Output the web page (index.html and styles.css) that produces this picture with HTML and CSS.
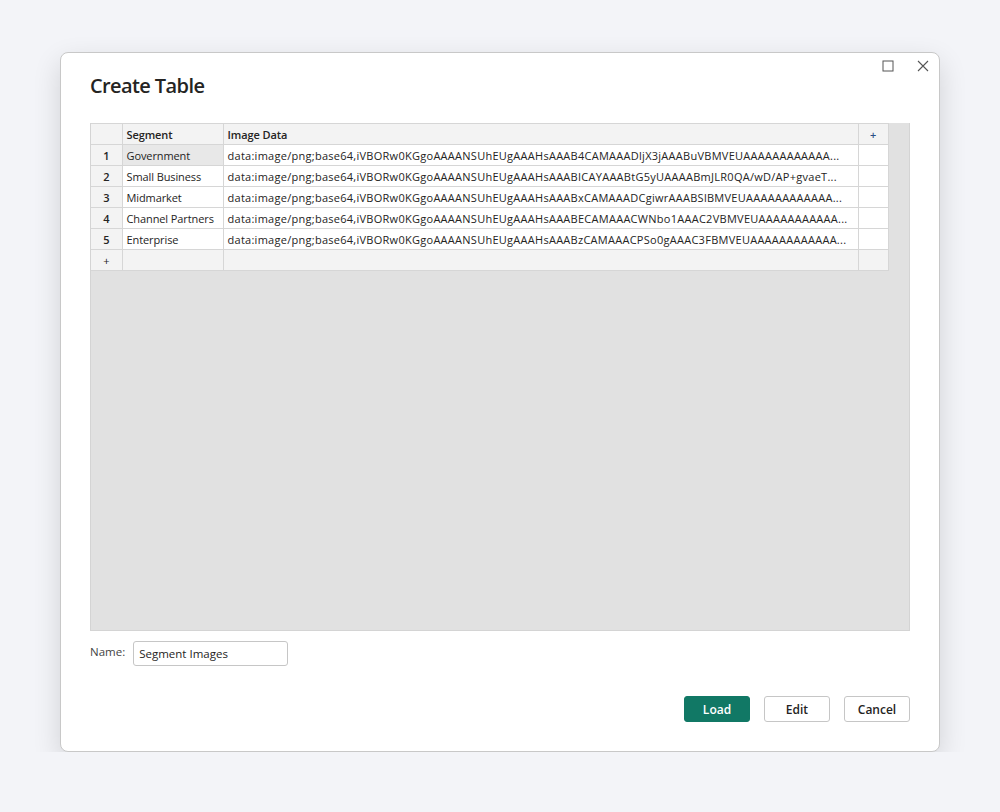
FILE: index.html
```html
<!DOCTYPE html>
<html lang="en">

<head>
    <meta charset="UTF-8">
    <title>Create Table</title>
    <link rel="stylesheet" href="styles.css">
</head>

<body>
    <div class="dialog">
        <div class="window-btns">
            <svg class="win-icon" width="12" height="12" viewBox="0 0 12 12">
                <rect x="1" y="1" width="10" height="10" fill="none" stroke="#555" stroke-width="1"/>
            </svg>
            <svg class="win-icon" width="12" height="12" viewBox="0 0 12 12">
                <path d="M1 1 L11 11 M11 1 L1 11" stroke="#555" stroke-width="1.1" fill="none"/>
            </svg>
        </div>

        <h2 class="title">Create Table</h2>

        <div class="grid-area">
            <table class="data-grid">
                <colgroup>
                    <col class="c-num">
                    <col class="c-seg">
                    <col class="c-data">
                    <col class="c-add">
                </colgroup>
                <thead>
                    <tr>
                        <th></th>
                        <th>Segment</th>
                        <th>Image Data</th>
                        <th class="add">+</th>
                    </tr>
                </thead>
                <tbody>
                    <tr>
                        <td class="num">1</td>
                        <td class="selected">Government</td>
                        <td class="data">data:image/png;base64,iVBORw0KGgoAAAANSUhEUgAAAHsAAAB4CAMAAADljX3jAAABuVBMVEUAAAAAAAAAAAA...</td>
                        <td></td>
                    </tr>
                    <tr>
                        <td class="num">2</td>
                        <td>Small Business</td>
                        <td class="data">data:image/png;base64,iVBORw0KGgoAAAANSUhEUgAAAHsAAABICAYAAABtG5yUAAAABmJLR0QA/wD/AP+gvaeT...</td>
                        <td></td>
                    </tr>
                    <tr>
                        <td class="num">3</td>
                        <td>Midmarket</td>
                        <td class="data">data:image/png;base64,iVBORw0KGgoAAAANSUhEUgAAAHsAAABxCAMAAADCgiwrAAABSlBMVEUAAAAAAAAAAAA...</td>
                        <td></td>
                    </tr>
                    <tr>
                        <td class="num">4</td>
                        <td>Channel Partners</td>
                        <td class="data">data:image/png;base64,iVBORw0KGgoAAAANSUhEUgAAAHsAAABECAMAAACWNbo1AAAC2VBMVEUAAAAAAAAAAA...</td>
                        <td></td>
                    </tr>
                    <tr>
                        <td class="num">5</td>
                        <td>Enterprise</td>
                        <td class="data">data:image/png;base64,iVBORw0KGgoAAAANSUhEUgAAAHsAAABzCAMAAACPSo0gAAAC3FBMVEUAAAAAAAAAAAA...</td>
                        <td></td>
                    </tr>
                    <tr class="new-row">
                        <td class="num add">+</td>
                        <td></td>
                        <td></td>
                        <td></td>
                    </tr>
                </tbody>
            </table>
        </div>

        <div class="name-row">
            <label for="tableName">Name:</label>
            <input type="text" id="tableName" value="Segment Images">
        </div>

        <div class="actions">
            <button class="btn primary">Load</button>
            <button class="btn">Edit</button>
            <button class="btn">Cancel</button>
        </div>
    </div>
</body>

</html>
```

FILE: styles.css
```css
body {
    margin: 0;
    padding: 52px 60px 0;
    background: #f3f4f8;
    font-family: "Open Sans", "Noto Sans", sans-serif;
    color: #252423;
}

.dialog {
    background: #fff;
    border: 1px solid #c8c8c8;
    border-radius: 8px;
    box-shadow: 0 10px 28px rgba(0, 0, 0, 0.14);
    height: 698px;
    padding: 0 29px;
    position: relative;
}

.window-btns {
    position: absolute;
    top: 7px;
    right: 10px;
    display: flex;
    gap: 23px;
}

.win-icon {
    display: block;
}

.title {
    margin: 0;
    padding-top: 19px;
    font-size: 20px;
    font-weight: 600;
    letter-spacing: -0.6px;
    line-height: 28px;
    color: #252423;
}

.grid-area {
    margin-top: 23px;
    height: 507px;
    background: #e1e1e1;
    border: 1px solid #d4d4d4;
    border-top: none;
}

.data-grid {
    border-collapse: collapse;
    table-layout: fixed;
    width: 797px;
    font-size: 11px;
    letter-spacing: -0.1px;
}

.c-num { width: 31px; }
.c-seg { width: 101px; }
.c-data { width: 635px; }
.c-add { width: 30px; }

.data-grid th,
.data-grid td {
    border: 1px solid #d6d6d6;
    height: 20px;
    padding: 0 4px;
    white-space: nowrap;
    overflow: hidden;
    text-overflow: ellipsis;
    text-align: left;
    background: #fff;
}

.data-grid td.data {
    letter-spacing: 0.27px;
}

.data-grid tr > :first-child {
    border-left: none;
}

.data-grid th {
    background: #f3f3f3;
    font-weight: 600;
    height: 20px;
}

.data-grid td.num {
    background: #f3f3f3;
    text-align: center;
    font-weight: 600;
}

.data-grid .add {
    text-align: center;
    font-weight: 400;
    font-size: 11px;
}

.data-grid th.add {
    color: #2b4f86;
    font-weight: 600;
}

.data-grid td.selected {
    background: #e8e8e8;
}

.new-row td {
    background: #f3f3f3;
}

.data-grid td.num.add {
    font-weight: 400;
}

.name-row {
    display: flex;
    align-items: center;
    gap: 8px;
    margin-top: 10px;
}

.name-row label {
    font-size: 11.5px;
    color: #444;
    position: relative;
    top: -2px;
}

.name-row input {
    width: 155px;
    height: 25px;
    box-sizing: border-box;
    border: 1px solid #c6c6c6;
    border-radius: 3px;
    padding: 0 5px;
    font-family: inherit;
    font-size: 11.5px;
    color: #252423;
}

.actions {
    display: flex;
    justify-content: flex-end;
    gap: 14px;
    margin-top: 30px;
}

.btn {
    width: 66px;
    height: 26px;
    box-sizing: border-box;
    border: 1px solid #c6c6c6;
    border-radius: 3px;
    background: #fff;
    font-family: inherit;
    font-size: 12px;
    font-weight: 600;
    color: #252423;
    padding: 0;
}

.btn.primary {
    background: #117865;
    border-color: #117865;
    color: #fff;
}
```
